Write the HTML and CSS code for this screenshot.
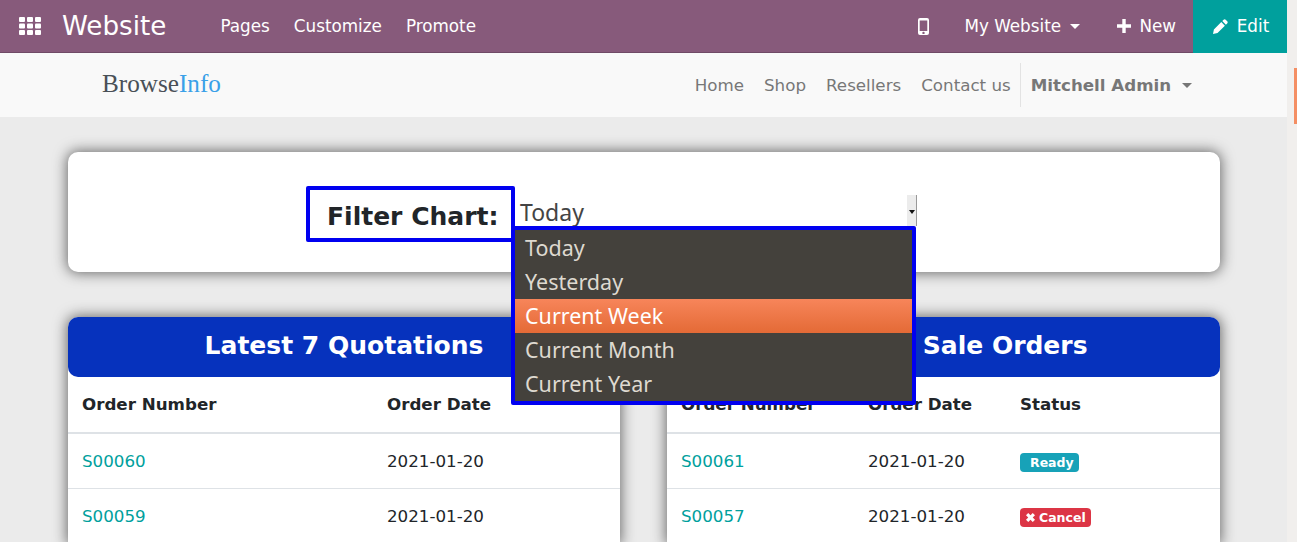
FILE: index.html
```html
<!DOCTYPE html>
<html>
<head>
<meta charset="UTF-8">
<title>Website</title>
<link rel="stylesheet" href="styles.css">
</head>
<body>
<div class="shell">
<div class="page">

<nav class="topbar">
  <svg class="apps" viewBox="0 0 22 18"><g fill="#fff"><rect x="0" y="0" width="6" height="5" rx="1"/><rect x="8" y="0" width="6" height="5" rx="1"/><rect x="16" y="0" width="6" height="5" rx="1"/><rect x="0" y="6.5" width="6" height="5" rx="1"/><rect x="8" y="6.5" width="6" height="5" rx="1"/><rect x="16" y="6.5" width="6" height="5" rx="1"/><rect x="0" y="13" width="6" height="5" rx="1"/><rect x="8" y="13" width="6" height="5" rx="1"/><rect x="16" y="13" width="6" height="5" rx="1"/></g></svg>
  <span class="brand">Website</span>
  <div class="topmenu">
    <a>Pages</a>
    <a>Customize</a>
    <a>Promote</a>
  </div>
  <div class="topright">
    <svg class="phone" viewBox="0 0 11 17"><path fill="#fff" fill-rule="evenodd" d="M2 0h7a2 2 0 0 1 2 2v13a2 2 0 0 1-2 2H2a2 2 0 0 1-2-2V2a2 2 0 0 1 2-2zM1.700 2.500v10.500h7.600V2.500zM5.500 13.700a1.200 1.200 0 1 0 0 2.400 1.200 1.200 0 0 0 0-2.400z"/></svg>
    <a class="mysite">My Website <i class="caret"></i></a>
    <a class="newbtn"><svg class="plus" viewBox="0 0 14 14"><path fill="#fff" d="M5.300 0h3.400v5.300H14v3.400H8.700V14H5.300V8.700H0V5.300h5.300z"/></svg>New</a>
    <a class="editbtn"><svg class="pencil" viewBox="0 0 15 15"><path fill="#fff" d="M10.600.8a1.500 1.500 0 0 1 2.100 0l1.500 1.500a1.500 1.500 0 0 1 0 2.100l-1.300 1.300-3.600-3.600zM8.300 3.100l3.600 3.600-7.400 7.400L0 15l.9-4.500z"/></svg>Edit</a>
  </div>
</nav>

<header class="sitebar">
  <div class="logo">Browse<span class="logo-blue">Info</span></div>
  <div class="sitemenu">
    <a>Home</a>
    <a>Shop</a>
    <a>Resellers</a>
    <a>Contact us</a>
  </div>
  <div class="usermenu">Mitchell Admin <i class="caret caret-grey"></i></div>
</header>

<main class="content">
  <section class="card filter">
    <div class="filter-label">Filter Chart:</div>
    <div class="filter-select">
      <span>Today</span>
      <div class="spin"><i></i></div>
    </div>
    <ul class="dropdown">
      <li>Today</li>
      <li>Yesterday</li>
      <li class="active">Current Week</li>
      <li>Current Month</li>
      <li>Current Year</li>
    </ul>
  </section>

  <div class="tables">
    <section class="card panel panel-left">
      <h2>Latest 7 Quotations</h2>
      <table>
        <colgroup><col class="col-left"><col></colgroup>
        <thead><tr><th>Order Number</th><th>Order Date</th></tr></thead>
        <tbody>
          <tr><td><a>S00060</a></td><td>2021-01-20</td></tr>
          <tr><td><a>S00059</a></td><td>2021-01-20</td></tr>
        </tbody>
      </table>
    </section>
    <section class="card panel panel-right">
      <h2>Latest 7 Sale Orders</h2>
      <table>
        <colgroup><col class="col-a"><col class="col-b"><col></colgroup>
        <thead><tr><th>Order Number</th><th>Order Date</th><th>Status</th></tr></thead>
        <tbody>
          <tr><td><a>S00061</a></td><td>2021-01-20</td><td><span class="badge ready">Ready</span></td></tr>
          <tr><td><a>S00057</a></td><td>2021-01-20</td><td><span class="badge cancel"><svg class="x" viewBox="0 0 10 10"><path fill="#fff" d="M2.500 0 5 2.500 7.500 0 10 2.500 7.500 5 10 7.500 7.500 10 5 7.500 2.500 10 0 7.500 2.500 5 0 2.500z"/></svg>Cancel</span></td></tr>
        </tbody>
      </table>
    </section>
  </div>
</main>

</div>
<div class="scroll"><div class="thumb"></div></div>
</div>
</body>
</html>
```

FILE: styles.css
```css
html, body {
    margin: 0;
    padding: 0;
    height: 542px;
    overflow: hidden;
}
body {
    font-family: "DejaVu Sans", sans-serif;
    font-size: 16.7px;
    color: #212529;
    background: #ebebeb;
}
.shell {
    display: flex;
    height: 542px;
}
.page {
    width: 1287px;
    flex: none;
    overflow: hidden;
}
.scroll {
    flex: 1;
    background: #f1efed;
    display: flex;
    justify-content: flex-end;
    padding-top: 68px;
    align-items: flex-start;
}
.thumb {
    width: 3px;
    height: 56px;
    background: #f48e63;
}

/* top purple bar */
.topbar {
    height: 52px;
    background: #875a7b;
    border-bottom: 1px solid #6f4a66;
    display: flex;
    align-items: center;
    color: #fff;
    font-size: 16.8px;
}
.apps {
    width: 22px;
    height: 18px;
    margin-left: 19px;
}
.brand {
    font-size: 26.2px;
    margin-left: 21px;
}
.topmenu {
    display: flex;
    gap: 24px;
    margin-left: 54px;
}
.topright {
    margin-left: auto;
    display: flex;
    align-items: center;
    height: 53px;
}
.phone {
    width: 11px;
    height: 17px;
    margin-right: 35px;
}
.mysite {
    margin-right: 37px;
}
.caret {
    display: inline-block;
    width: 0;
    height: 0;
    margin-left: 4px;
    vertical-align: 3px;
    border-top: 5px solid #fff;
    border-left: 5px solid transparent;
    border-right: 5px solid transparent;
}
.caret-grey {
    border-top-color: #777;
}
.newbtn {
    display: flex;
    align-items: center;
    margin-right: 17px;
}
.plus {
    width: 14px;
    height: 14px;
    margin-right: 8px;
}
.editbtn {
    width: 94px;
    height: 53px;
    box-sizing: border-box;
    padding-left: 2px;
    background: #00a09d;
    display: flex;
    align-items: center;
    justify-content: center;
}
.pencil {
    width: 15px;
    height: 15px;
    margin-right: 9px;
}

/* site header */
.sitebar {
    height: 64px;
    background: #f9f9f9;
    display: flex;
    align-items: center;
    color: #777;
}
.logo {
    font-family: "Liberation Serif", serif;
    font-size: 25.2px;
    color: #495057;
    margin-left: 102px;
    padding-bottom: 2px;
}
.logo-blue {
    color: #3aa0e8;
}
.sitemenu {
    margin-left: auto;
    display: flex;
    gap: 20px;
}
.usermenu {
    font-weight: bold;
    margin-left: 9px;
    margin-right: 95px;
    padding: 12px 0 12px 10px;
    border-left: 1px solid #e3e3e3;
}
.usermenu .caret {
    margin-left: 5px;
}

/* content */
.content {
    padding: 35px 67px 0 68px;
}
.card {
    background: #fff;
    box-shadow: 0 0 14px 1px #666;
}
.filter {
    position: relative;
    height: 120px;
    border-radius: 10px;
    display: flex;
    align-items: flex-start;
    padding-left: 238px;
    padding-top: 34px;
    box-sizing: border-box;
}
.filter-label {
    width: 209px;
    height: 56px;
    box-sizing: border-box;
    border: 4px solid #0000f0;
    border-radius: 2px;
    font-size: 25px;
    font-weight: bold;
    padding-left: 17px;
    line-height: 54px;
}
.filter-select {
    width: 402px;
    height: 31px;
    margin-top: 9px;
    display: flex;
    justify-content: space-between;
    font-family: "Noto Sans", sans-serif;
    font-size: 23px;
    color: #444;
    padding-left: 5px;
    box-sizing: border-box;
    line-height: 34px;
}
.spin {
    width: 10px;
    height: 31px;
    background: #ececec;
    border-right: 1px solid #999;
    box-sizing: border-box;
    display: flex;
    justify-content: center;
    padding-top: 15px;
}
.spin i {
    width: 0;
    height: 0;
    border-top: 4px solid #111;
    border-left: 3px solid transparent;
    border-right: 3px solid transparent;
}
.dropdown {
    position: absolute;
    left: 443px;
    top: 74px;
    width: 405px;
    margin: 0;
    padding: 1px 0 0;
    box-sizing: border-box;
    list-style: none;
    background: #44413c;
    border: 4px solid #0000f0;
    border-radius: 2px;
    font-family: "Noto Sans", sans-serif;
    font-size: 21.5px;
    color: #ded9d0;
}
.dropdown li {
    height: 34px;
    line-height: 34px;
    padding-left: 10px;
}
.dropdown .active {
    color: #fff;
    background: linear-gradient(#f7855a, #e46a36);
}

/* tables */
.tables {
    display: flex;
    gap: 47px;
    margin-top: 45px;
}
.panel {
    border-radius: 10px 10px 0 0;
}
.panel-left {
    width: 552px;
}
.panel-right {
    width: 553px;
}
.panel h2 {
    margin: 0;
    height: 60px;
    line-height: 58px;
    background: #0632bd;
    color: #fff;
    border-radius: 10px;
    font-size: 25px;
    text-align: center;
}
.panel table {
    width: 100%;
    table-layout: fixed;
    border-collapse: collapse;
}
.col-left {
    width: 305px;
}
.col-a {
    width: 187px;
}
.col-b {
    width: 152px;
}
.panel th {
    height: 56px;
    padding: 0 14px 2px;
    box-sizing: border-box;
    text-align: left;
    border-bottom: 2px solid #dee2e6;
}
.panel td {
    height: 54px;
    padding: 0 14px;
    border-bottom: 1px solid #dee2e6;
}
.panel a {
    color: #00a09d;
}
.badge {
    display: inline-flex;
    align-items: center;
    height: 19px;
    padding: 0 5px 0 6px;
    border-radius: 4px;
    color: #fff;
    font-size: 12.5px;
    font-weight: bold;
    vertical-align: middle;
}
.ready {
    background: #17a2b8;
    padding-left: 10px;
}
.cancel {
    background: #dc3545;
}
.x {
    width: 9px;
    height: 9px;
    margin-right: 4px;
}
```
